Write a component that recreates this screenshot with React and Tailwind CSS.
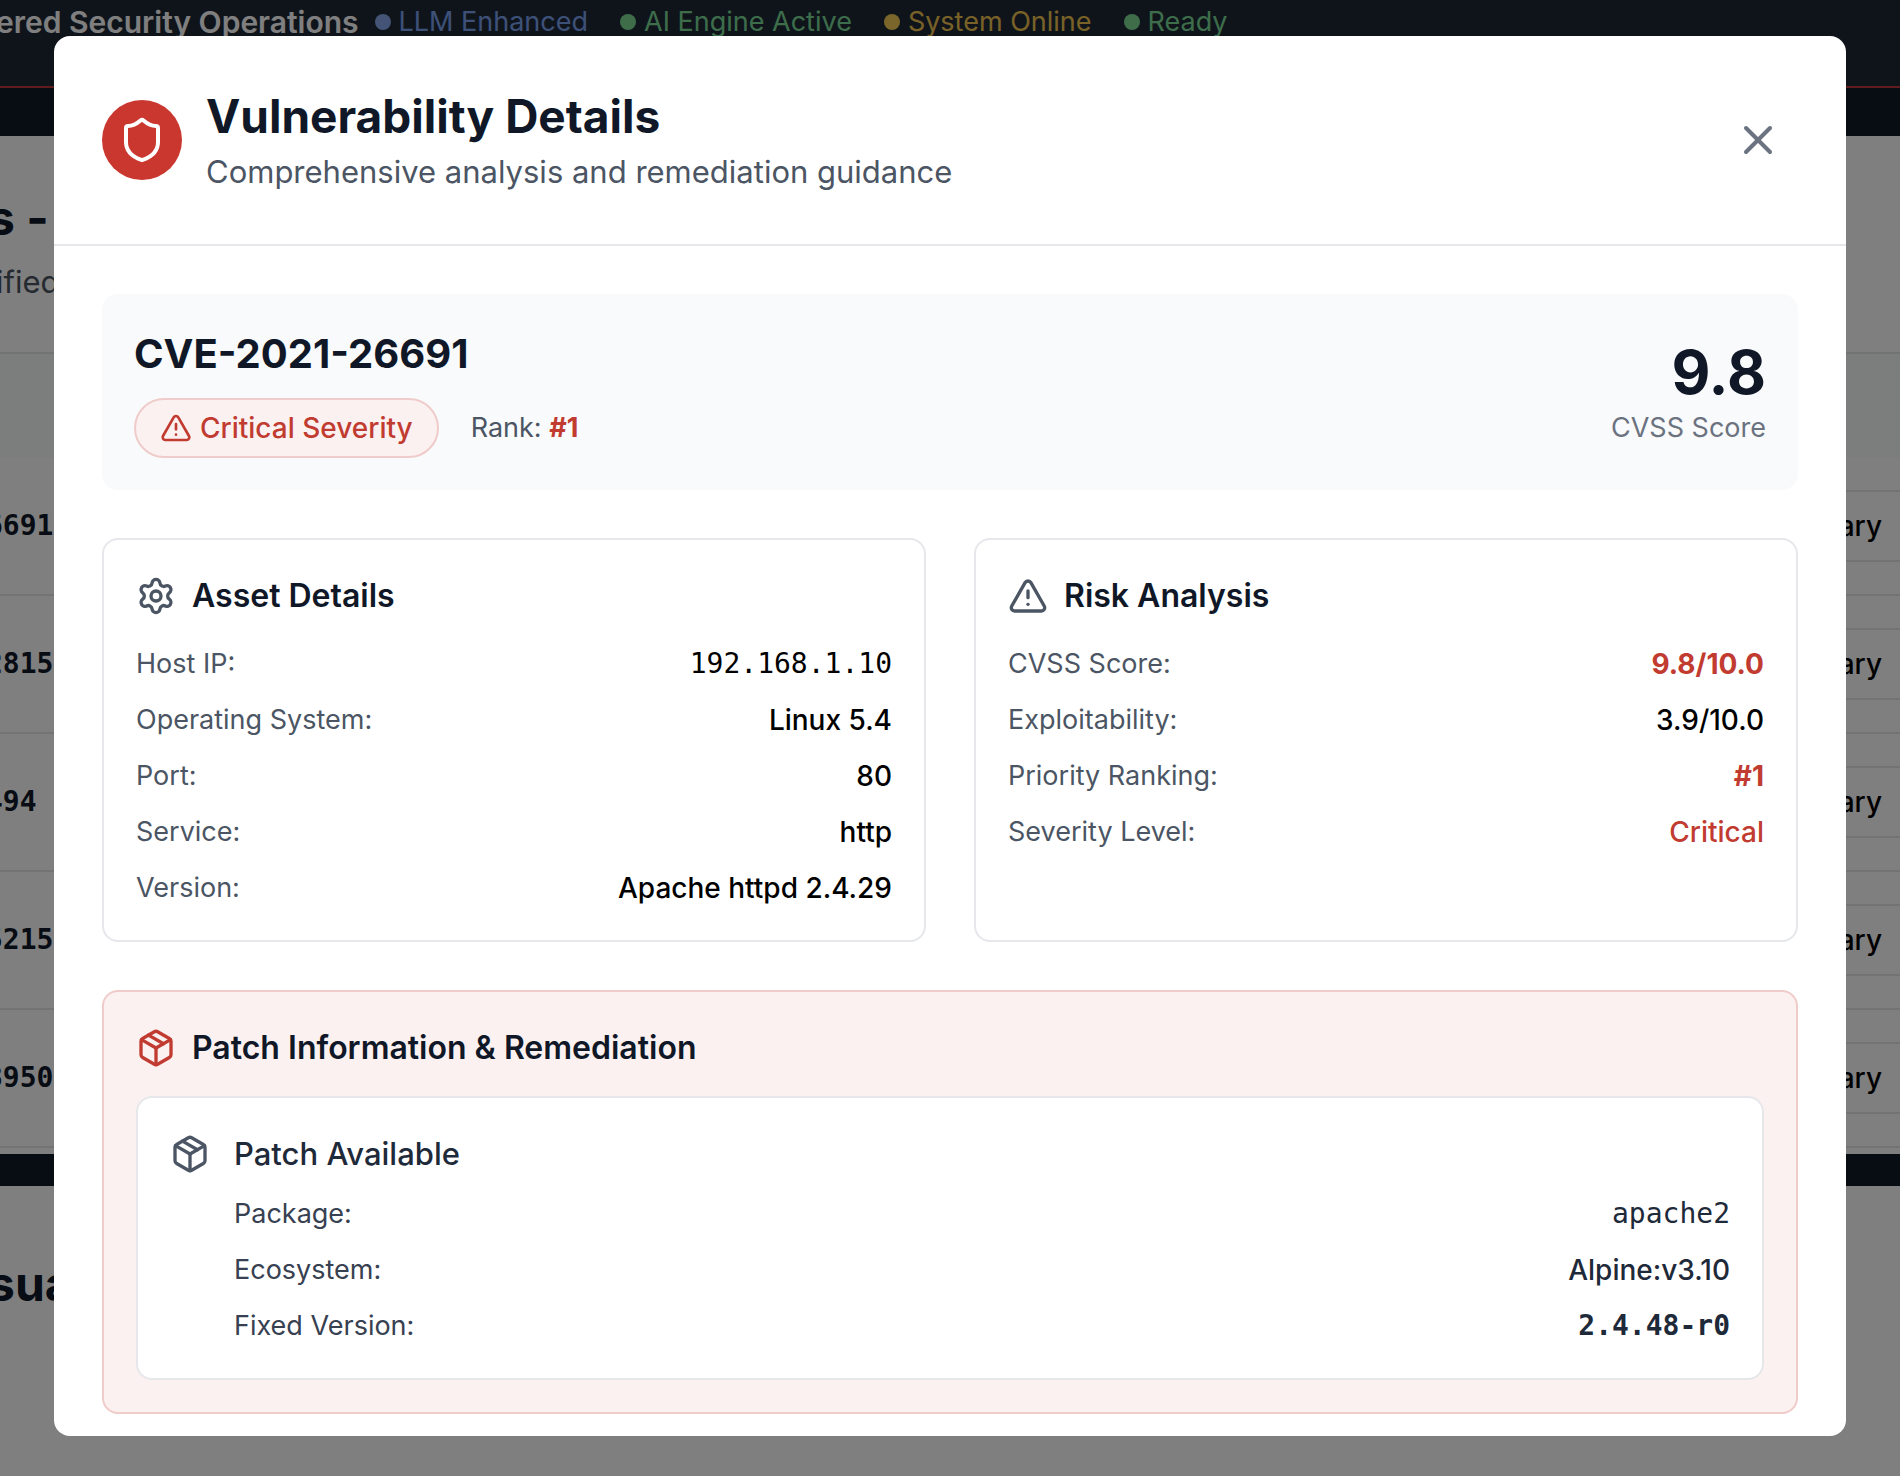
import { AlertTriangle, Package, Settings, Shield, X } from "lucide-react";

const statuses = [
  { label: "LLM Enhanced", text: "text-[#7ba3f0]", dot: "bg-[#86a8ee]" },
  { label: "AI Engine Active", text: "text-[#7adb96]", dot: "bg-[#7edb95]" },
  { label: "System Online", text: "text-[#f0c44e]", dot: "bg-[#f5cb54]" },
  { label: "Ready", text: "text-[#7adb96]", dot: "bg-[#7edb95]" },
];

const assetRows = [
  { label: "Host IP:", value: "192.168.1.10", style: "font-['DejaVu_Sans_Mono',monospace] text-black" },
  { label: "Operating System:", value: "Linux 5.4", style: "font-medium text-black" },
  { label: "Port:", value: "80", style: "font-medium text-black" },
  { label: "Service:", value: "http", style: "font-medium text-black" },
  { label: "Version:", value: "Apache httpd 2.4.29", style: "font-medium text-black" },
];

const riskRows = [
  { label: "CVSS Score:", value: "9.8/10.0", style: "font-bold text-[#c13b31]" },
  { label: "Exploitability:", value: "3.9/10.0", style: "font-medium text-black" },
  { label: "Priority Ranking:", value: "#1", style: "font-bold text-[#c13b31]" },
  { label: "Severity Level:", value: "Critical", style: "font-medium text-[#c13b31]" },
];

const patchRows = [
  { label: "Package:", value: "apache2", style: "font-['DejaVu_Sans_Mono',monospace] text-gray-800" },
  { label: "Ecosystem:", value: "Alpine:v3.10", style: "font-medium text-gray-800" },
  { label: "Fixed Version:", value: "2.4.48-r0", style: "font-['DejaVu_Sans_Mono',monospace] font-bold text-gray-800" },
];

const tableRows = ["6691", "2815", "494", "5215", "3950"];

function Rows({ rows, labelStyle }) {
  return (
    <dl className="flex flex-col gap-4 leading-10">
      {rows.map((row) => (
        <div key={row.label} className="flex justify-between">
          <dt className={`text-[27px] ${labelStyle}`}>{row.label}</dt>
          <dd className={`text-[28px] ${row.style}`}>{row.value}</dd>
        </div>
      ))}
    </dl>
  );
}

function InfoCard({ icon: Icon, title, rows }) {
  return (
    <section className="rounded-2xl border-2 border-gray-200 p-8">
      <h4 className="mb-6 flex items-center gap-4 text-[32px] leading-12 font-semibold text-gray-900">
        <Icon className="size-10 text-[#4b5563]" />
        {title}
      </h4>
      <Rows rows={rows} labelStyle="text-[#4b5563]" />
    </section>
  );
}

function Dashboard() {
  return (
    <div className="min-h-screen bg-white">
      <header className="flex h-[88px] items-start border-b-2 border-[#c23a3a] bg-[#1f2937] whitespace-nowrap">
        <span className="-ml-1 text-[30px] leading-11 font-semibold text-white">ered Security Operations</span>
        <ul className="ml-4 flex gap-8 text-[27px] leading-11">
          {statuses.map((s) => (
            <li key={s.label} className={`flex items-center gap-2 ${s.text}`}>
              <span className={`size-4 rounded-full ${s.dot}`} />
              {s.label}
            </li>
          ))}
        </ul>
      </header>
      <div className="h-12 bg-[#111827]" />
      <main className="overflow-hidden">
        <div className="h-[218px] border-b-2 border-gray-200 pt-[50px] whitespace-nowrap">
          <h1 className="-ml-3 text-[48px] leading-16 font-bold text-gray-900">s -</h1>
          <p className="-ml-1 pt-2 text-[31px] leading-12 text-[#4b5563]">ified</p>
        </div>
        <div className="h-[104px] bg-gray-50" />
        {tableRows.map((id) => (
          <div key={id} className="flex h-[138px] items-center justify-between border-b-2 border-gray-200">
            <span className="-ml-3.5 font-['DejaVu_Sans_Mono',monospace] text-[28px] leading-10 font-bold text-gray-900">
              {id}
            </span>
            <button className="-mr-2 h-[72px] rounded-lg border-2 border-gray-200 px-6 text-[28px] font-medium text-black">
              Summary
            </button>
          </div>
        ))}
        <div className="mt-1.5 h-8 bg-[#111827]" />
        <h2 className="-ml-3 pt-[66px] text-[48px] leading-16 font-bold text-gray-900">sua</h2>
      </main>
    </div>
  );
}

function DetailsModal() {
  return (
    <div className="absolute inset-0 bg-black/50 px-[54px] pt-9 pb-10">
      <div role="dialog" aria-labelledby="details-title" className="h-full overflow-hidden rounded-2xl bg-white">
        <header className="flex items-center justify-between border-b-2 border-gray-200 p-12">
          <div className="flex items-center gap-6">
            <span className="flex size-20 items-center justify-center rounded-full bg-[#c9372f]">
              <Shield className="size-12 text-white" />
            </span>
            <div>
              <h2 id="details-title" className="text-[46px] leading-16 font-bold text-gray-900">
                Vulnerability Details
              </h2>
              <p className="text-[31px] leading-12 text-[#4b5563]">Comprehensive analysis and remediation guidance</p>
            </div>
          </div>
          <button aria-label="Close" className="p-4 text-[#6b7280]">
            <X className="size-12" />
          </button>
        </header>

        <div className="flex flex-col gap-12 p-12">
          <section className="flex items-center justify-between rounded-2xl bg-gray-50 p-8">
            <div>
              <h3 className="mb-4 text-[40px] leading-14 font-bold text-gray-900">CVE-2021-26691</h3>
              <div className="flex items-center gap-8 leading-10">
                <span className="flex items-center gap-2 rounded-full border-2 border-[#efcbca] bg-[#fbf1f0] px-6 py-2 text-[28px] font-medium text-[#c13b31]">
                  <AlertTriangle className="size-8" />
                  Critical Severity
                </span>
                <span className="text-[27px] text-[#4b5563]">
                  Rank: <span className="font-bold text-[#c13b31]">#1</span>
                </span>
              </div>
            </div>
            <div className="text-right">
              <div className="text-[60px] leading-18 font-bold text-gray-900">9.8</div>
              <div className="text-[27px] leading-10 text-[#6b7280]">CVSS Score</div>
            </div>
          </section>

          <div className="grid grid-cols-2 gap-12">
            <InfoCard icon={Settings} title="Asset Details" rows={assetRows} />
            <InfoCard icon={AlertTriangle} title="Risk Analysis" rows={riskRows} />
          </div>

          <section className="rounded-2xl border-2 border-[#efcbca] bg-[#fbf1f0] p-8">
            <h4 className="mb-6 flex items-center gap-4 text-[32px] leading-12 font-semibold text-gray-900">
              <Package className="size-10 text-[#c13b31]" />
              Patch Information &amp; Remediation
            </h4>
            <div className="flex gap-6 rounded-2xl border-2 border-gray-200 bg-white p-8">
              <Package className="mt-1 size-10 text-[#4b5563]" />
              <div className="flex-1">
                <h5 className="mb-4 text-[31px] leading-12 font-medium text-gray-800">Patch Available</h5>
                <Rows rows={patchRows} labelStyle="text-[#374151]" />
              </div>
            </div>
          </section>
        </div>
      </div>
    </div>
  );
}

export default function App() {
  return (
    <div className="relative h-screen overflow-hidden font-['Inter',sans-serif]">
      <Dashboard />
      <DetailsModal />
    </div>
  );
}
